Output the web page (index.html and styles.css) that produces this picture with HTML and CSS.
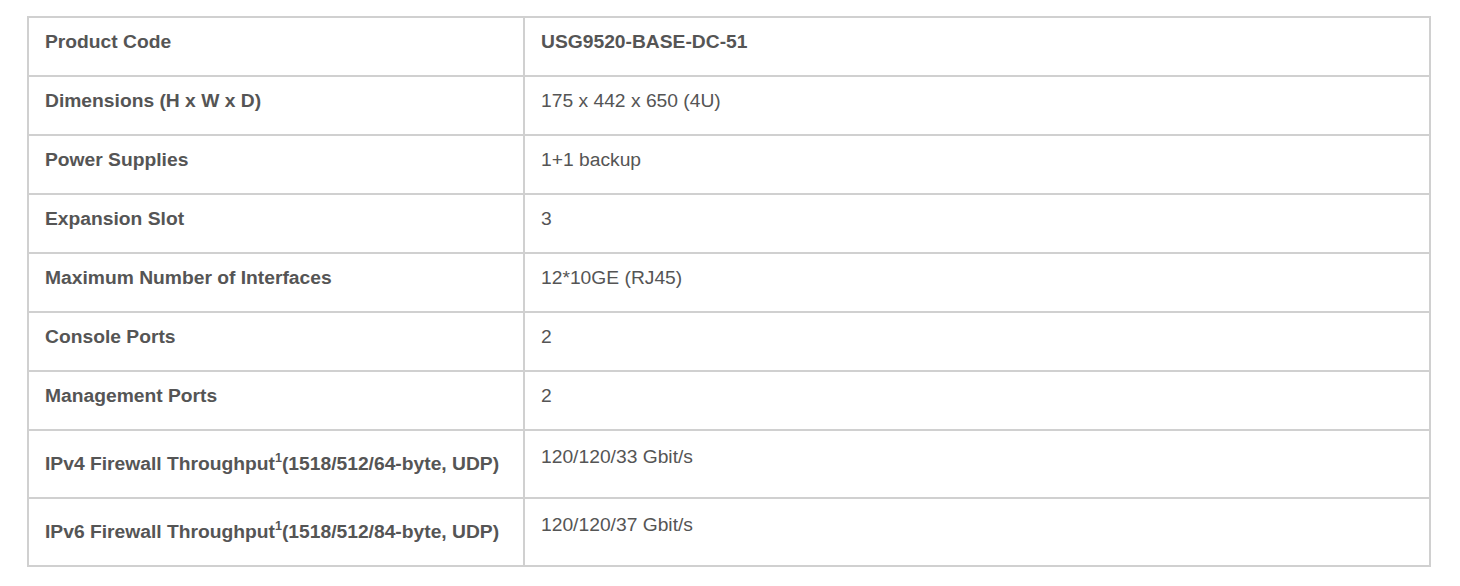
FILE: index.html
```html
<!DOCTYPE html>
<html lang="en">
<head>
<meta charset="utf-8">
<title>USG9520 Specifications</title>
<link rel="stylesheet" href="styles.css">
</head>
<body>
<div class="wrap">
  <table class="spec">
    <tbody>
      <tr><th class="key">Product Code</th><td class="val strong">USG9520-BASE-DC-51</td></tr>
      <tr><th class="key">Dimensions (H x W x D)</th><td class="val">175 x 442 x 650 (4U)</td></tr>
      <tr><th class="key">Power Supplies</th><td class="val">1+1 backup</td></tr>
      <tr><th class="key">Expansion Slot</th><td class="val">3</td></tr>
      <tr><th class="key">Maximum Number of Interfaces</th><td class="val">12*10GE (RJ45)</td></tr>
      <tr><th class="key">Console Ports</th><td class="val">2</td></tr>
      <tr><th class="key">Management Ports</th><td class="val">2</td></tr>
      <tr class="tall"><th class="key">IPv4 Firewall Throughput<sup>1</sup>(1518/512/64-byte, UDP)</th><td class="val">120/120/33 Gbit/s</td></tr>
      <tr class="tall"><th class="key">IPv6 Firewall Throughput<sup>1</sup>(1518/512/84-byte, UDP)</th><td class="val">120/120/37 Gbit/s</td></tr>
    </tbody>
  </table>
</div>
</body>
</html>
```
FILE: styles.css
```css
html, body {
  margin: 0;
  padding: 0;
  background: #ffffff;
}

.wrap {
  padding: 16px 29px 20px 27px;
}

.spec {
  width: 100%;
  border-collapse: collapse;
  font-family: "Liberation Sans", Arial, sans-serif;
  font-size: 19.25px;
  color: #555555;
}

.spec th,
.spec td {
  border: 2px solid #d0d0d0;
  padding: 13px 16px 22px 16px;
  line-height: 22px;
  text-align: left;
  vertical-align: top;
}

.key {
  width: 462px;
  font-weight: bold;
}

.val {
  font-weight: normal;
}

.val.strong {
  font-weight: bold;
}

.tall .val {
  padding-top: 15px;
}

.key sup {
  font-size: 12.5px;
  line-height: 28px;
  vertical-align: 8px;
}
```
